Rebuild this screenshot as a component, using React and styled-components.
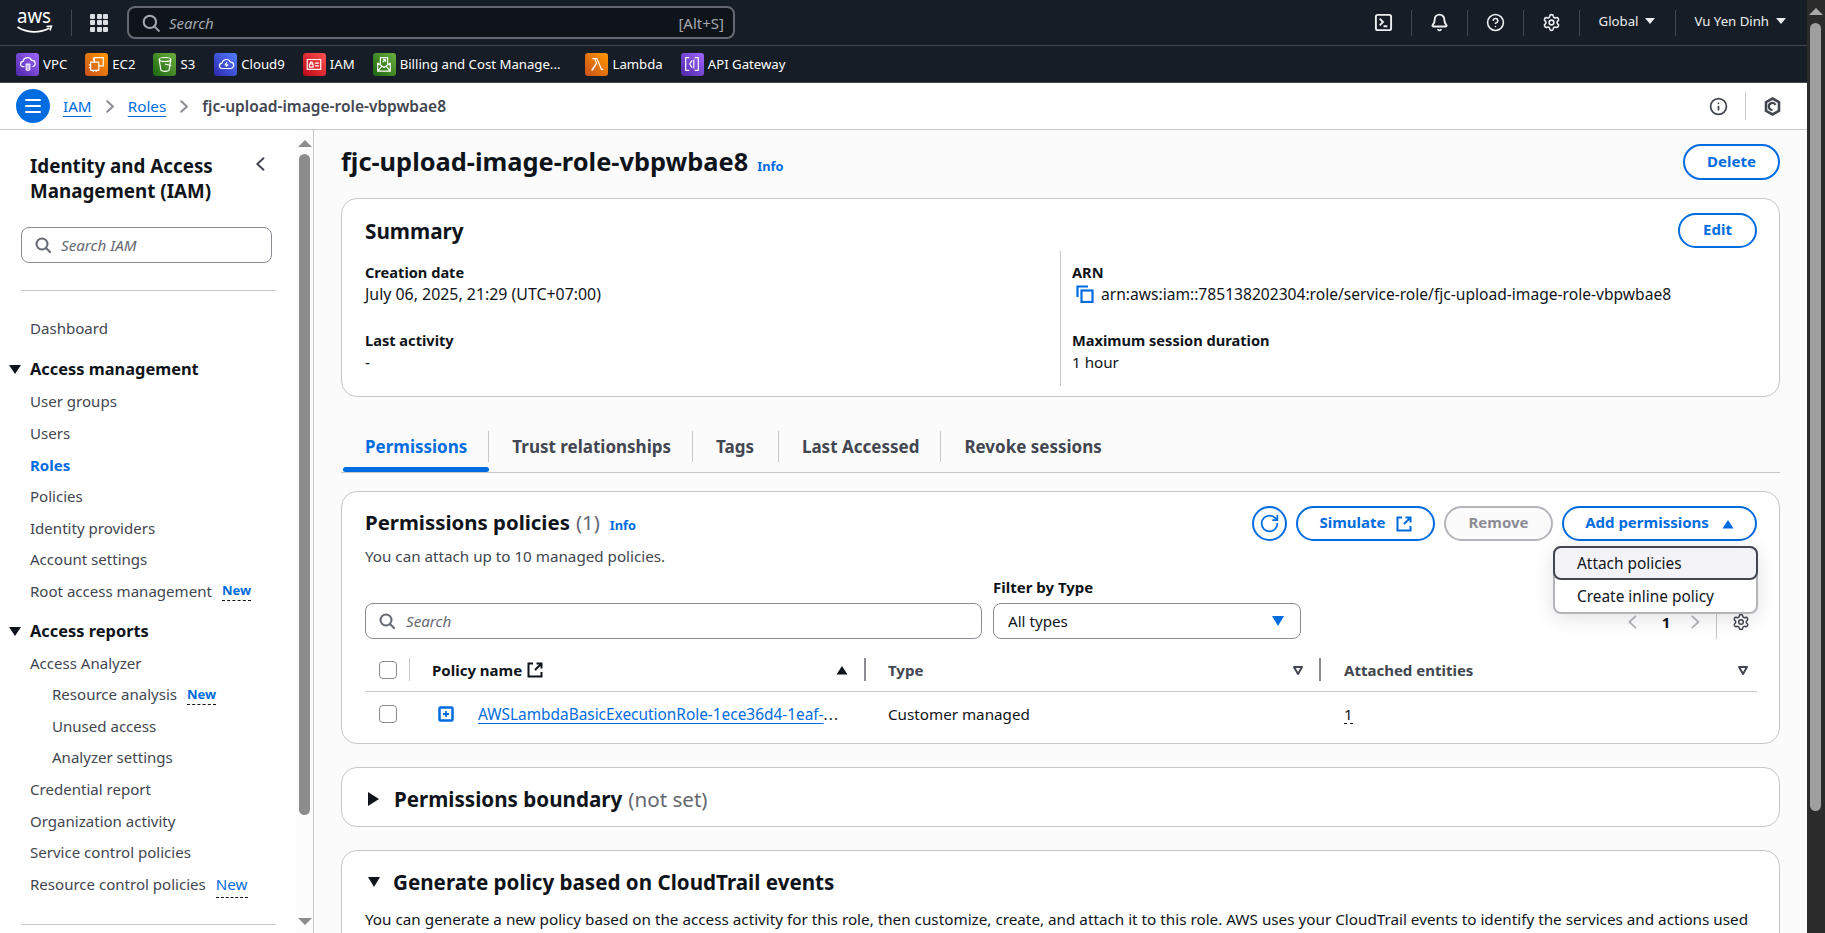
import React from "react";
import styled, { createGlobalStyle } from "styled-components";
import { Bell, CircleHelp, Info as InfoIcon, RotateCw, Settings } from "lucide-react";

const font = '"Noto Sans", "Open Sans", sans-serif';
const Global = createGlobalStyle`
  html, body { margin: 0; padding: 0; height: 100%; overflow: hidden; }
  body { font-family: ${font}; font-size: 15.2px; color: #0f141a; background: #fbfbfc; }
  * { box-sizing: border-box; }
`;

const Page = styled.div` width: 1825px; height: 933px; display: flex; overflow: hidden; `;
const Content = styled.div` flex: 1; min-width: 0; display: flex; flex-direction: column; `;
const TopNav = styled.header`
  height: 46px; flex: none; background: #161d26; border-bottom: 1px solid #424650;
  display: flex; align-items: center; padding: 0 21px 0 17px; color: #fff;
`;
const Logo = styled.svg` width: 36px; height: 45px; flex: none; `;
const NavSep = styled.div`
  width: 1px; height: 26px; background: #424650; flex: none; margin-left: ${p => p.$ml || 0}px;
`;
const Grid9 = styled.div`
  display: grid; grid-template-columns: repeat(3, 5px); gap: 1.5px; margin: 0 19px 0 18px; flex: none;
  i { display: block; width: 5px; height: 5px; background: #dbdee3; border-radius: 1px; }
`;
const GlobalSearch = styled.div`
  width: 608px; height: 33px; flex: none; border: 2px solid #656871; border-radius: 8px; background: #0f141a;
  display: flex; align-items: center; padding: 0 9px 0 13px; gap: 9px; color: #a4a8b0; font-size: 15px;
  em { flex: 1; font-style: italic; }
`;
const NavRight = styled.div` margin-left: auto; display: flex; align-items: center; `;
const NavIcon = styled.div` width: 55px; display: flex; justify-content: center; color: #eceef0; `;
const NavMenu = styled.div`
  display: flex; align-items: center; gap: 7px; font-size: 13.2px; color: #eceef0; padding: 0 ${p => p.$pr || 0}px 3px ${p => p.$pl || 0}px;
`;
const Caret = styled.span`
  width: 0; height: 0; border-left: 5px solid transparent; border-right: 5px solid transparent;
  border-top: 6px solid #eceef0; display: inline-block;
`;
const SelectCaret = styled.span`
  width: 0; height: 0; border-left: 6px solid transparent; border-right: 6px solid transparent;
  border-top: 10px solid #006ce0; display: inline-block;
`;
const FavBar = styled.nav`
  height: 37px; flex: none; background: #161d26; display: flex; align-items: center; padding-left: 16px;
  border-bottom: 1px solid #424650;
`;
const Fav = styled.div`
  display: flex; align-items: center; gap: 4px; color: #fff; font-size: 13.2px; margin-right: ${p => p.$mr}px; white-space: nowrap;
`;
const FavBadge = styled.span`
  width: 23px; height: 23px; border-radius: 3px; background: ${p => p.$bg}; display: flex; align-items: center; justify-content: center; flex: none;
`;
const Crumbs = styled.div`
  height: 47px; flex: none; background: #fff; border-bottom: 1px solid #c6c6cd;
  display: flex; align-items: center; padding: 0 26px 0 16px; font-size: 15.2px;
`;
const MenuBtn = styled.div`
  width: 34px; height: 34px; border-radius: 50%; background: #006ce0; display: flex; flex-direction: column; gap: 3.5px;
  align-items: center; justify-content: center; margin-right: 13px; flex: none;
  i { display: block; width: 16px; height: 2.2px; background: #fff; border-radius: 1px; }
`;
const CrumbLink = styled.a` color: #006ce0; text-decoration: underline; text-underline-offset: 4px; `;
const CrumbCur = styled.span` color: #424650; font-weight: 600; font-size: 15.5px; `;
const CrumbSep = styled.span` display: flex; margin: 0 14px; color: #8c8c94; `;
const CrumbTools = styled.div` margin-left: auto; display: flex; align-items: center; color: #424650; `;
const CrumbDiv = styled.div` width: 1px; height: 28px; background: #c6c6cd; margin: 0 18px 0 17px; `;
const Body = styled.div` flex: 1; display: flex; min-height: 0; `;
const Side = styled.aside`
  width: 314px; flex: none; background: #fff; border-right: 1px solid #c6c6cd; display: flex; min-height: 0;
`;
const SideInner = styled.div` flex: 1; padding: 24px 0 0 21px; overflow: hidden; min-width: 0; `;
const SideHead = styled.div`
  display: flex; justify-content: space-between; align-items: flex-start; padding: 0 31px 0 9px; color: #424650;
  h2 { margin: 0; font-size: 18.8px; line-height: 25px; font-weight: 700; color: #0f141a; }
  svg { margin-top: 3px; }
`;
const SideSearch = styled.div`
  margin-top: 23px; width: 251px; height: 36px; border: 1px solid #8c8c94; border-radius: 8px; padding-bottom: 1px;
  display: flex; align-items: center; gap: 10px; padding-left: 13px; color: #656871; font-size: 15.2px; font-style: italic;
`;
const SideRule = styled.div` height: 1px; width: 255px; background: #c6c6cd; margin: ${p => p.$m}; `;
const SideList = styled.div` display: flex; flex-direction: column; `;
const SideItem = styled.div`
  height: 31.6px; flex: none; display: flex; align-items: center; gap: 10px; font-size: 15.05px; color: ${p => p.$active ? "#006ce0" : "#424650"};
  font-weight: ${p => p.$active ? 700 : 400}; padding-left: ${p => p.$sub ? 31 : 9}px; white-space: nowrap;
`;
const SideGroup = styled.div`
  height: 32px; flex: none; margin: ${p => p.$m}; display: flex; align-items: center; font-size: 16.4px; font-weight: 700; color: #0f141a; position: relative; padding-left: 9px;
`;
const GroupCaret = styled.span`
  position: absolute; left: -12px; top: 12px; width: 0; height: 0; border-left: 6px solid transparent; border-right: 6px solid transparent; border-top: 9px solid #0f141a;
`;
const NewTag = styled.span`
  color: #006ce0; font-size: ${p => p.$plain ? 15.2 : 13}px; font-weight: ${p => p.$plain ? 400 : 700}; border-bottom: 1px dashed #0f141a; line-height: ${p => p.$plain ? 25 : 19}px; margin-top: ${p => p.$plain ? 2 : 1}px;
`;
const SideScroll = styled.div`
  width: 17px; flex: none; background: #fcfcfc; display: flex; flex-direction: column; align-items: center;
  padding-top: 10px; position: relative;
`;
const SideThumb = styled.div` width: 11px; height: 661px; border-radius: 6px; background: #8c8c8c; margin-top: 7px; `;
const PageScroll = styled.div`
  width: 18px; flex: none; background: #2b2b2b; display: flex; flex-direction: column; align-items: center; padding: 8px 1px 0 0;
`;
const PageThumb = styled.div` width: 11px; height: 788px; border-radius: 6px; background: #9f9f9f; margin-top: 8px; `;
const ArrowUp = styled.span`
  width: 0; height: 0; border-left: 7px solid transparent; border-right: 7px solid transparent; border-bottom: 7px solid ${p => p.$c};
`;
const ArrowDown = styled.span`
  position: absolute; bottom: 8px; width: 0; height: 0; border-left: 7px solid transparent; border-right: 7px solid transparent; border-top: 7px solid #8c8c8c;
`;
const Main = styled.main` flex: 1; padding: 14px 27px 0; min-width: 0; overflow: hidden; background: #fbfbfc; `;
const TitleRow = styled.div` display: flex; align-items: center; height: 36px; justify-content: space-between; `;
const TitleText = styled.div`
  display: flex; align-items: baseline; gap: 9px; padding-bottom: 2px;
  h1 { margin: 0; font-size: 25.4px; line-height: 34px; font-weight: 700; }
`;
const Info = styled.a` color: #006ce0; font-size: 12.8px; font-weight: 700; `;
const Pill = styled.button`
  width: ${p => p.$w}px; height: ${p => p.$h || 35}px; padding: 0 0 3px; border-radius: 20px; border: 2px solid ${p => p.$off ? "#b4b4bb" : "#006ce0"}; background: ${p => p.$off ? "#fbfbfc" : "#fff"};
  color: ${p => p.$off ? "#8c8c94" : "#006ce0"}; font: 700 15px ${font}; display: inline-flex; align-items: center; justify-content: center; gap: ${p => p.$gap || 10}px; flex: none; white-space: nowrap;
  svg { margin-top: 3px; }
`;
const Card = styled.section` background: #fff; border: 1px solid #c6c6cd; border-radius: 16px; position: relative; `;
const SummaryCard = styled(Card)` margin-top: 18px; height: 199px; padding: 14px 22px 0 23px; `;
const SummaryHead = styled.div`
  display: flex; justify-content: space-between; align-items: center; height: 35px;
  h2 { margin: 0; font-size: 20.7px; line-height: 30px; font-weight: 700; }
`;
const SummaryGrid = styled.div` display: grid; grid-template-columns: 695px 1fr; margin-top: 3px; `;
const SummaryCol = styled.div`
  display: flex; flex-direction: column; gap: 24px; height: 135px; padding-top: 10px;
  ${p => p.$right ? "border-left: 1px solid #c6c6cd; padding-left: 11px;" : ""}
`;
const KV = styled.div`
  b { display: block; font-size: 14.6px; line-height: 22px; font-weight: 700; }
  span { display: flex; align-items: center; gap: 7px; font-size: ${p => p.$fs || 15.2}px; line-height: 22px; color: #0f141a; white-space: nowrap; }
  svg { margin-left: 4px; }
`;
const Tabs = styled.div` margin-top: 34px; height: 42px; border-bottom: 1px solid #c6c6cd; display: flex; align-items: flex-start; `;
const Tab = styled.div`
  display: flex; align-items: center; padding: 0 ${p => p.$pr || 22}px 0 ${p => p.$pl || 23}px; font-size: 17px; font-weight: 700; height: 31px;
  color: ${p => p.$active ? "#006ce0" : "#424650"}; position: relative;
  &:not(:last-child)::after { content: ""; position: absolute; right: 0; top: 0; bottom: 0; width: 1px; background: #c6c6cd; }
  ${p => p.$active ? `&::before { content: ""; position: absolute; left: 2px; right: 0; top: 36px; height: 5px; background: #006ce0; border-radius: 3px; }` : ""}
`;
const PolicyCard = styled(Card)` margin-top: 18px; height: 253px; padding: 14px 22px 0 23px; `;
const PolicyHead = styled.div` display: flex; justify-content: space-between; align-items: flex-start; `;
const PolicyTitle = styled.div`
  h2 { margin: 0; font-size: 20.4px; line-height: 32px; font-weight: 700; display: flex; align-items: baseline; gap: 10px; }
  h2 span { font-weight: 400; color: #656871; margin-left: -4px; }
  p { margin: 5px 0 0; color: #424650; font-size: 15.2px; line-height: 20px; }
`;
const PolicyActions = styled.div` display: flex; gap: 9px; align-items: center; `;
const RoundBtn = styled.div`
  width: 35px; height: 35px; border-radius: 50%; border: 2px solid #006ce0; color: #006ce0; display: flex; align-items: center; justify-content: center;
`;
const FilterRow = styled.div` display: flex; align-items: flex-end; margin-top: 11px; height: 62px; `;
const InputBox = styled.div`
  height: 36px; border: 1px solid #8c8c94; border-radius: 8px; display: flex; align-items: center; background: #fff; font-size: 15.2px;
`;
const SearchBox = styled(InputBox)` width: 617px; padding: 0 0 1px 13px; gap: 11px; color: #656871; font-style: italic; `;
const SelectWrap = styled.div`
  margin-left: 11px;
  b { display: block; font-size: 15px; line-height: 20px; margin-bottom: 6px; }
`;
const SelectBox = styled(InputBox)` width: 308px; justify-content: space-between; padding: 0 16px 1px 14px; color: #0f141a; `;
const Pager = styled.div`
  margin-left: auto; display: flex; align-items: center; height: 36px; color: #b4b4bb; padding: 2px 7px 0 0;
  b { color: #0f141a; font-size: 15px; margin: 0 21px 0 25px; }
`;
const PagerSep = styled.div` width: 1px; height: 34px; background: #c6c6cd; margin: 0 15px 0 16px; `;
const Table = styled.div` margin-top: 10px; `;
const TableRow = styled.div`
  display: grid; grid-template-columns: 44px 455px 455px 1fr; height: ${p => p.$h}px; align-items: center;
  border-bottom: ${p => p.$line ? "1px solid #c6c6cd" : "none"};
`;
const Check = styled.div` width: 18px; height: 18px; border: 1px solid #8c8c94; border-radius: 4px; background: #fff; margin-left: 14px; `;
const Th = styled.div`
  display: flex; align-items: center; font-size: 15px; font-weight: 700; height: 100%; position: relative; padding-left: ${p => p.$pl}px; gap: 5px; color: ${p => p.$dark ? "#0f141a" : "#424650"};
  &::before { content: ""; position: absolute; left: 0; top: 9px; bottom: 10px; width: ${p => p.$thin ? 1 : 2}px; background: ${p => p.$thin ? "#c6c6cd" : "#8c8c94"}; }
`;
const SortMark = styled.span` position: absolute; right: ${p => p.$r}px; display: flex; `;
const Td = styled.div` display: flex; align-items: center; font-size: 15.2px; color: #0f141a; padding-left: ${p => p.$pl}px; white-space: nowrap; `;
const PlusIcon = styled.svg` margin-right: 24px; flex: none; `;
const RowLink = styled.span` color: #006ce0; font-size: 15.4px; text-decoration: underline; text-underline-offset: 3px; `;
const Ellipsis = styled.span` letter-spacing: 1.2px; `;
const DashedNum = styled.span` border-bottom: 1px dashed #0f141a; line-height: 18px; `;
const Dropdown = styled.div`
  position: absolute; top: 54px; right: 21px; width: 205px; height: 68px; background: #fff; border: 2px solid #b4b4bb; border-radius: 8px;
  box-shadow: 0 4px 20px rgba(0, 7, 22, 0.12); z-index: 5;
`;
const DropItem = styled.div`
  height: ${p => p.$hover ? 34 : 32}px; display: flex; align-items: center; padding-left: 22px; font-size: 15.4px; color: #0f141a;
  ${p => p.$hover ? "background: #f3f3f7; border: 2px solid #424650; border-radius: 8px; margin: -2px -2px 0;" : ""}
`;
const Collapsed = styled(Card)`
  margin-top: ${p => p.$mt}px; height: ${p => p.$h}px; padding: 16px 23px 0 26px; overflow: hidden;
  h2 { margin: 0; font-size: 20.6px; line-height: 30px; font-weight: 700; display: flex; align-items: center; gap: 15px; }
  p { margin: 11px 0 0 -3px; font-size: 15.25px; line-height: 22px; color: #0f141a; white-space: nowrap; }
`;
const MutedNote = styled.span` color: #656871; font-weight: 400; margin-left: -9px; `;
const Tri = styled.span`
  width: 0; height: 0; display: inline-block; flex: none;
  ${p => p.$open ? "border-left: 6.5px solid transparent; border-right: 6.5px solid transparent; border-top: 10px solid #0f141a; margin-right: -2px;" : "border-top: 7px solid transparent; border-bottom: 7px solid transparent; border-left: 11px solid #0f141a;"}
`;

const Ic = ({ size = 16, sw = 2, children, ...r }) => (
  <svg width={size} height={size} viewBox="0 0 16 16" fill="none" stroke="currentColor" strokeWidth={sw} strokeLinecap="round" strokeLinejoin="round" {...r}>{children}</svg>
);
const SearchIc = (p) => <Ic {...p}><circle cx="7" cy="7" r="5.500" /><path d="M11 11l4 4" /></Ic>;
const Chevron = ({ dir = "r", size = 14, sw = 1.800 }) => (
  <svg width={size * 10 / 16} height={size} viewBox="0 0 10 16" fill="none" stroke="currentColor" strokeWidth={sw * 16 / size} strokeLinecap="round" strokeLinejoin="round">
    {dir === "r" ? <path d="M1.500 1.500L8.500 8l-7 6.500" /> : <path d="M8.500 1.500L1.500 8l7 6.500" />}
  </svg>
);
const ExtIc = (p) => <Ic {...p}><path d="M6 1.500H1.500v13h13V10" strokeLinecap="butt" strokeLinejoin="miter" /><path d="M9.500 1.500h5v5M14.500 1.500L8 8" strokeLinecap="butt" strokeLinejoin="miter" /></Ic>;
const SortTri = ({ hollow, c = "#424650" }) => (
  <svg width="12" height="12" viewBox="0 0 12 12">
    {hollow ? <path d="M2 3h8L6 10z" fill="none" stroke={c} strokeWidth="2" strokeLinejoin="round" /> : <path d="M0.500 10.500h11L6 2z" fill={c} />}
  </svg>
);

const favIcons = {
  vpc: <><path d="M6 13H5a3 3 0 01-.500-6 5 5 0 019.500-1 3.500 3.500 0 011 7" /><path d="M8 10h4v6a2 1 0 01-4 0zM10 10v6" /></>,
  ec2: <><rect x="3" y="8" width="9" height="9" /><path d="M7 8V3h10v9h-5M6 6V3M3 11H1M3 14H1M6 17v2M9 17v2" /></>,
  s3: <><ellipse cx="10" cy="5" rx="6.500" ry="2.200" /><path d="M3.500 5l2 12c1 1.500 8 1.500 9 0l2-12M10 10l7 2" /></>,
  cloud: <><path d="M6 15a3 3 0 01-.500-6 5 5 0 019.500-1 3.500 3.500 0 010 7z" /><path d="M11 8l-2 3h3l-2 2" /></>,
  iam: <><rect x="2.500" y="5" width="15" height="11" /><path d="M11 9h4.500M11 12h4.500M5 10h4v3.500H5zM6 10V8h2v2" /></>,
  bill: <><path d="M3 9v9h14V9l-7 5zM3 18l5-6M17 18l-5-6M6 10V3h8v7" /><path d="M8.500 8l3-3M9 5h2.500v2.500" /></>,
  lambda: <path d="M4 17l5.500-8-2-5H5M7.500 4H10l5 12h2M9.500 9L5 17" />,
  api: <><path d="M7 3H3v14h4M13 3h4v14h-4" /><path d="M10 6l-2.500 4 2.500 4M12 5v10" /></>,
};
const favs = [
  ["VPC", "linear-gradient(45deg,#4d27a8,#a166ff)", "vpc", 18],
  ["EC2", "linear-gradient(45deg,#c8511b,#ff9900)", "ec2", 18],
  ["S3", "linear-gradient(45deg,#1b660f,#6cae3e)", "s3", 19],
  ["Cloud9", "linear-gradient(45deg,#2e27ad,#527fff)", "cloud", 18],
  ["IAM", "linear-gradient(45deg,#bd0816,#ff5252)", "iam", 18],
  ["Billing and Cost Manage...", "linear-gradient(45deg,#1b660f,#6cae3e)", "bill", 25],
  ["Lambda", "linear-gradient(45deg,#c8511b,#ff9900)", "lambda", 18],
  ["API Gateway", "linear-gradient(45deg,#4d27a8,#a166ff)", "api", 0],
];

const sideA = ["User groups", "Users", "Roles", "Policies", "Identity providers", "Account settings"];

export default function App() {
  return (
    <Page>
      <Global />
      <Content>
        <TopNav>
          <Logo viewBox="0 0 36 45">
            <text x="0" y="23" fontFamily="'Noto Sans', sans-serif" fontSize="19" fill="#fff" textLength="34" lengthAdjust="spacingAndGlyphs">aws</text>
            <path d="M0.500 27c9 6 22 6.500 32 1" fill="none" stroke="#fff" strokeWidth="1.800" />
            <path d="M29.500 26.500l5-.5-1.500 4.500" fill="none" stroke="#fff" strokeWidth="1.500" />
          </Logo>
          <NavSep $ml={18} />
          <Grid9>{Array.from({ length: 9 }, (_, i) => <i key={i} />)}</Grid9>
          <GlobalSearch><SearchIc size={18} sw={1.800} /><em>Search</em><span>[Alt+S]</span></GlobalSearch>
          <NavRight>
            <NavIcon>
              <svg width="19" height="19" viewBox="0 0 20 20" fill="none" stroke="currentColor" strokeWidth="2"><rect x="2" y="2" width="16" height="16" rx="2" /><path d="M6 6l3.500 3.500L6 13M10 14h4" /></svg>
            </NavIcon>
            <NavSep />
            <NavIcon><Bell size={19} strokeWidth={2.400} fill="none" /></NavIcon>
            <NavSep />
            <NavIcon><CircleHelp size={19} strokeWidth={2} /></NavIcon>
            <NavSep />
            <NavIcon><Settings size={19} strokeWidth={2} /></NavIcon>
            <NavSep />
            <NavMenu $pl={19} $pr={20}>Global <Caret /></NavMenu>
            <NavSep />
            <NavMenu $pl={18}>Vu Yen Dinh <Caret /></NavMenu>
          </NavRight>
        </TopNav>
        <FavBar>
          {favs.map(([t, bg, k, mr]) => (
            <Fav key={t} $mr={mr}>
              <FavBadge $bg={bg}>
                <svg width="18" height="18" viewBox="0 0 20 20" fill="none" stroke="#fff" strokeWidth="1.300" strokeLinejoin="round">{favIcons[k]}</svg>
              </FavBadge>
              {t}
            </Fav>
          ))}
        </FavBar>
        <Crumbs>
          <MenuBtn><i /><i /><i /></MenuBtn>
          <CrumbLink>IAM</CrumbLink>
          <CrumbSep><Chevron size={13} sw={2} /></CrumbSep>
          <CrumbLink>Roles</CrumbLink>
          <CrumbSep><Chevron size={13} sw={2} /></CrumbSep>
          <CrumbCur>fjc-upload-image-role-vbpwbae8</CrumbCur>
          <CrumbTools>
            <InfoIcon size={19} strokeWidth={2.200} />
            <CrumbDiv />
            <svg width="17" height="19" viewBox="0 0 17 19" fill="none" stroke="currentColor" strokeWidth="2.600"><path d="M8.500 1.500l6.500 3.700v8.600l-6.500 3.700L2 13.800V5.200z" /><path d="M11.500 8A3.500 3.500 0 108.500 13" strokeWidth="2.200" /></svg>
          </CrumbTools>
        </Crumbs>
        <Body>
          <Side>
            <SideInner>
              <SideHead>
                <h2>Identity and Access<br />Management (IAM)</h2>
                <Chevron dir="l" size={14} sw={2} />
              </SideHead>
              <SideSearch><SearchIc size={16} sw={2} /> Search IAM</SideSearch>
              <SideRule $m="27px 0 21px" />
              <SideList>
                <SideItem>Dashboard</SideItem>
                <SideGroup $m="9px 0 1px"><GroupCaret />Access management</SideGroup>
                {sideA.map(t => <SideItem key={t} $active={t === "Roles"}>{t}</SideItem>)}
                <SideItem>Root access management <NewTag>New</NewTag></SideItem>
                <SideGroup $m="8px 0 0"><GroupCaret />Access reports</SideGroup>
                <SideItem>Access Analyzer</SideItem>
                <SideItem $sub>Resource analysis <NewTag>New</NewTag></SideItem>
                <SideItem $sub>Unused access</SideItem>
                <SideItem $sub>Analyzer settings</SideItem>
                <SideItem>Credential report</SideItem>
                <SideItem>Organization activity</SideItem>
                <SideItem>Service control policies</SideItem>
                <SideItem>Resource control policies <NewTag $plain>New</NewTag></SideItem>
              </SideList>
              <SideRule $m="24px 0 0" />
            </SideInner>
            <SideScroll>
              <ArrowUp $c="#8c8c8c" />
              <SideThumb />
              <ArrowDown />
            </SideScroll>
          </Side>
          <Main>
            <TitleRow>
              <TitleText><h1>fjc-upload-image-role-vbpwbae8</h1><Info>Info</Info></TitleText>
              <Pill $w={97} $h={36}>Delete</Pill>
            </TitleRow>
            <SummaryCard>
              <SummaryHead><h2>Summary</h2><Pill $w={79}>Edit</Pill></SummaryHead>
              <SummaryGrid>
                <SummaryCol>
                  <KV $fs={15.9}><b>Creation date</b><span>July 06, 2025, 21:29 (UTC+07:00)</span></KV>
                  <KV><b>Last activity</b><span>-</span></KV>
                </SummaryCol>
                <SummaryCol $right>
                  <KV $fs={15.6}><b>ARN</b><span>
                    <svg width="18" height="18" viewBox="0 0 18 18" fill="none" stroke="#006ce0" strokeWidth="2.200"><path d="M1.500 12V1.500H12" /><rect x="5.500" y="5.500" width="11" height="11.500" /></svg>
                    arn:aws:iam::785138202304:role/service-role/fjc-upload-image-role-vbpwbae8
                  </span></KV>
                  <KV><b>Maximum session duration</b><span>1 hour</span></KV>
                </SummaryCol>
              </SummaryGrid>
            </SummaryCard>
            <Tabs>
              <Tab $active $pl={24}>Permissions</Tab>
              <Tab>Trust relationships</Tab>
              <Tab $pr={25}>Tags</Tab>
              <Tab>Last Accessed</Tab>
              <Tab>Revoke sessions</Tab>
            </Tabs>
            <PolicyCard>
              <PolicyHead>
                <PolicyTitle>
                  <h2>Permissions policies <span>(1)</span> <Info>Info</Info></h2>
                  <p>You can attach up to 10 managed policies.</p>
                </PolicyTitle>
                <PolicyActions>
                  <RoundBtn><RotateCw size={21} strokeWidth={2} /></RoundBtn>
                  <Pill $w={139}>Simulate <ExtIc size={16} /></Pill>
                  <Pill $w={109} $off>Remove</Pill>
                  <Pill $w={195} $gap={13}>Add permissions <SortTri c="#006ce0" /></Pill>
                </PolicyActions>
              </PolicyHead>
              <Dropdown>
                <DropItem $hover>Attach policies</DropItem>
                <DropItem>Create inline policy</DropItem>
              </Dropdown>
              <FilterRow>
                <SearchBox><SearchIc size={16} /> Search</SearchBox>
                <SelectWrap>
                  <b>Filter by Type</b>
                  <SelectBox>All types <SelectCaret /></SelectBox>
                </SelectWrap>
                <Pager>
                  <Chevron dir="l" size={14} sw={1.800} />
                  <b>1</b>
                  <Chevron size={14} sw={1.800} />
                  <PagerSep />
                  <Settings size={18} strokeWidth={2} color="#424650" />
                </Pager>
              </FilterRow>
              <Table>
                <TableRow $h={43} $line>
                  <Check />
                  <Th $pl={23} $thin $dark>Policy name <ExtIc size={16} /><SortMark $r={16}><SortTri c="#0f141a" /></SortMark></Th>
                  <Th $pl={24}>Type<SortMark $r={15}><SortTri hollow /></SortMark></Th>
                  <Th $pl={25}>Attached entities<SortMark $r={8}><SortTri hollow /></SortMark></Th>
                </TableRow>
                <TableRow $h={44}>
                  <Check />
                  <Td $pl={29}>
                    <PlusIcon width="16" height="16" viewBox="0 0 16 16" fill="none" stroke="#006ce0" strokeWidth="2.500"><rect x="1.500" y="1.500" width="13" height="13" rx="1" /><path d="M5 8h6M8 5v6" strokeWidth="1.800" /></PlusIcon>
                    <RowLink>AWSLambdaBasicExecutionRole-1ece36d4-1eaf-</RowLink><Ellipsis>...</Ellipsis>
                  </Td>
                  <Td $pl={24}>Customer managed</Td>
                  <Td $pl={25}><DashedNum>1</DashedNum></Td>
                </TableRow>
              </Table>
            </PolicyCard>
            <Collapsed $mt={23} $h={60}>
              <h2><Tri />Permissions boundary <MutedNote>(not set)</MutedNote></h2>
            </Collapsed>
            <Collapsed $mt={23} $h={200}>
              <h2><Tri $open />Generate policy based on CloudTrail events</h2>
              <p>You can generate a new policy based on the access activity for this role, then customize, create, and attach it to this role. AWS uses your CloudTrail events to identify the services and actions used</p>
            </Collapsed>
          </Main>
        </Body>
      </Content>
      <PageScroll>
        <ArrowUp $c="#a8a8a8" />
        <PageThumb />
      </PageScroll>
    </Page>
  );
}
